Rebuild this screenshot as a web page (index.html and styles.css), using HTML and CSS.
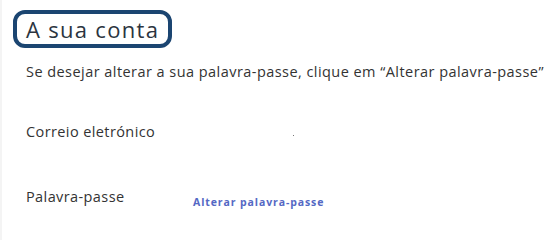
FILE: index.html
```html
<!DOCTYPE html>
<html lang="pt">
<head>
    <meta charset="UTF-8">
    <meta name="viewport" content="width=device-width, initial-scale=1.0">
    <title>A sua conta</title>
    <link rel="stylesheet" href="styles.css">
</head>
<body>
    <div class="page">
        <h1 class="title">A sua conta</h1>
        <p class="intro">Se desejar alterar a sua palavra-passe, clique em “Alterar palavra-passe”</p>
        <div class="row">
            <span class="label">Correio eletrónico</span>
            <span class="value"><span class="dot"></span></span>
        </div>
        <div class="row row-password">
            <span class="label">Palavra-passe</span>
            <a class="change-link" href="#">Alterar palavra-passe</a>
        </div>
    </div>
</body>
</html>
```

FILE: styles.css
```css
* {
    margin: 0;
    padding: 0;
    box-sizing: border-box;
}
body {
    background: #fff;
    font-family: "Open Sans", Lato, sans-serif;
    color: #333;
}
.page {
    border-left: 2px solid #f4f4f4;
    min-height: 240px;
    padding: 10px 0 0 11px;
}
.title {
    display: inline-block;
    font-size: 22px;
    font-weight: 400;
    letter-spacing: 1.3px;
    line-height: 30px;
    padding: 0 9px 0 9px;
    border: 4px solid #1b4571;
    border-radius: 12px;
    color: #2b3440;
}
.intro {
    font-size: 14.5px;
    margin: 14px 0 0 13px;
    line-height: 20px;
    letter-spacing: 0.45px;
    white-space: nowrap;
}
.row {
    display: flex;
    align-items: flex-start;
    margin: 40px 0 0 13px;
    font-size: 14.5px;
    letter-spacing: 0.4px;
}
.row-password {
    margin-top: 45px;
}
.label {
    width: 167px;
    line-height: 20px;
}
.value {
    flex: 1;
    padding: 13px 0 0 100px;
}
.dot {
    display: block;
    width: 1px;
    height: 1px;
    background: #777;
}
.change-link {
    margin-top: 8px;
    font-size: 10.5px;
    line-height: 14px;
    font-weight: 700;
    color: #5468c4;
    text-decoration: none;
    letter-spacing: 0.9px;
}
```
